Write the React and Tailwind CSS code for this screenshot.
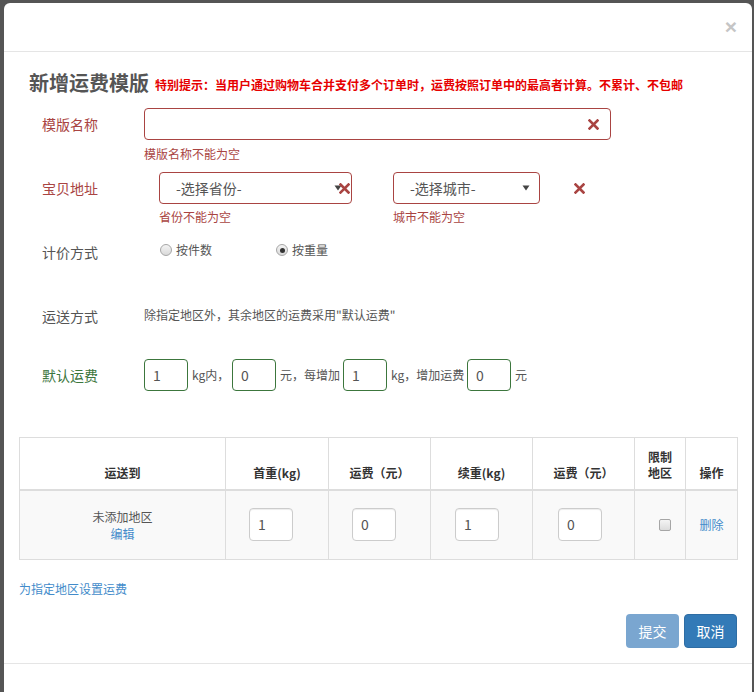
import React from "react";

const FONT = { fontFamily: '"Noto Sans CJK SC", "Noto Sans", "Liberation Sans", sans-serif' };

function XIcon({ className = "" }) {
  return (
    <svg width="11" height="11" viewBox="0 0 11 11" className={className}>
      <path d="M1.5 1.5 L9.5 9.5 M9.5 1.5 L1.5 9.5" stroke="#a94442" strokeWidth="2.6" strokeLinecap="square" />
    </svg>
  );
}

function Caret() {
  return (
    <svg width="8" height="6" viewBox="0 0 8 6">
      <path d="M0.5 0.5 L7.5 0.5 L4 5.5 Z" fill="#444" />
    </svg>
  );
}

function Radio({ checked }) {
  return (
    <span className="relative inline-block w-[12px] h-[12px] rounded-full border border-[#a6a6a6] bg-gradient-to-b from-[#f4f4f4] to-[#d9d9d9]">
      {checked && <span className="absolute left-[2.5px] top-[2.5px] w-[5px] h-[5px] rounded-full bg-[#333]" />}
    </span>
  );
}

function GreenInput({ value }) {
  return (
    <div className="w-[44px] h-[32px] border border-[#3c763d] rounded-[4px] flex items-center pl-[8px] text-[14px] text-[#555] bg-white shrink-0">
      {value}
    </div>
  );
}

function CellInput({ value }) {
  return (
    <div className="w-[44px] h-[33px] border border-[#ccc] rounded-[4px] flex items-center pl-[8px] text-[14px] text-[#555] bg-white shadow-[inset_0_1px_1px_rgba(0,0,0,0.075)]">
      {value}
    </div>
  );
}

export default function App() {
  return (
    <div className="w-[754px] h-[692px] bg-[#555] overflow-hidden pt-[3px] pl-[4px]" style={FONT}>
      <div className="w-[748px] min-h-[740px] bg-white rounded-[6px] flex flex-col">
        {/* header */}
        <div className="h-[49px] border-b border-[#e5e5e5] flex items-center justify-end pr-[15px]">
          <span className="text-[21px] font-bold text-[#c5c5c5] leading-none mt-[-2px]" style={{ fontFamily: '"Liberation Sans", sans-serif' }}>×</span>
        </div>

        {/* body */}
        <div className="px-[15px]">
          {/* title */}
          <div className="mt-[17px] h-[28px] flex items-center pl-[10px]">
            <span className="text-[20px] font-bold text-[#555] leading-[28px]">新增运费模版</span>
            <span className="ml-[6px] mt-[3px] text-[12px] font-bold text-[#e60000] leading-[17px]">
              特别提示：当用户通过购物车合并支付多个订单时，运费按照订单中的最高者计算。不累计、不包邮
            </span>
          </div>

          {/* name */}
          <div className="mt-[11px] flex items-center h-[32px]">
            <div className="w-[125px] pl-[23px] text-[14px] text-[#a94442]">模版名称</div>
            <div className="relative w-[467px] h-[32px] border border-[#a94442] rounded-[4px] bg-white">
              <XIcon className="absolute right-[11px] top-[10px]" />
            </div>
          </div>
          <div className="mt-[5px] h-[17px] leading-[17px] pl-[125px] text-[12px] text-[#a94442]">模版名称不能为空</div>

          {/* address */}
          <div className="mt-[10px] flex">
            <div className="w-[125px] pl-[23px] h-[32px] flex items-center text-[14px] text-[#a94442]">宝贝地址</div>
            <div className="ml-[15px] w-[193px]">
              <div className="relative h-[32px] border border-[#a94442] rounded-[4px] flex items-center pl-[16px] text-[14px] text-[#555]">
                -选择省份-
                <span className="absolute right-[9px] top-[12px]"><Caret /></span>
                <XIcon className="absolute right-[1px] top-[10px]" />
              </div>
              <div className="mt-[4px] h-[17px] leading-[17px] text-[12px] text-[#a94442]">省份不能为空</div>
            </div>
            <div className="ml-[41px] w-[147px]">
              <div className="relative h-[32px] border border-[#a94442] rounded-[4px] flex items-center pl-[16px] text-[14px] text-[#555]">
                -选择城市-
                <span className="absolute right-[9px] top-[12px]"><Caret /></span>
              </div>
              <div className="mt-[4px] h-[17px] leading-[17px] text-[12px] text-[#a94442]">城市不能为空</div>
            </div>
            <div className="ml-[34px] h-[32px] flex items-center">
              <XIcon />
            </div>
          </div>

          {/* pricing */}
          <div className="mt-[17px] h-[20px] flex items-center">
            <div className="w-[125px] pl-[23px] text-[14px] text-[#555]">计价方式</div>
            <div className="ml-[16px] flex items-center mt-[-4px]">
              <Radio />
              <span className="ml-[4px] text-[12px] text-[#555]">按件数</span>
            </div>
            <div className="ml-[64px] flex items-center mt-[-4px]">
              <Radio checked />
              <span className="ml-[4px] text-[12px] text-[#555]">按重量</span>
            </div>
          </div>

          {/* shipping */}
          <div className="mt-[44px] h-[20px] flex items-center">
            <div className="w-[125px] pl-[23px] text-[14px] text-[#555]">运送方式</div>
            <div className="text-[12px] text-[#555] mt-[-3px]">除指定地区外，其余地区的运费采用"默认运费"</div>
          </div>

          {/* default fee */}
          <div className="mt-[33px] h-[32px] flex items-center text-[12px] text-[#555]">
            <div className="w-[125px] pl-[23px] text-[14px] text-[#3c763d]">默认运费</div>
            <GreenInput value="1" />
            <span className="ml-[4px] w-[40px]">kg内，</span>
            <GreenInput value="0" />
            <span className="ml-[4px] w-[63px]">元，每增加</span>
            <GreenInput value="1" />
            <span className="ml-[4px] w-[76px]">kg，增加运费</span>
            <GreenInput value="0" />
            <span className="ml-[4px]">元</span>
          </div>

          {/* table */}
          <table className="mt-[46px] w-[718px] table-fixed border-collapse text-[12px] text-[#333]">
            <colgroup>
              <col className="w-[206px]" />
              <col className="w-[103px]" />
              <col className="w-[102px]" />
              <col className="w-[102px]" />
              <col className="w-[102px]" />
              <col className="w-[51px]" />
              <col className="w-[52px]" />
            </colgroup>
            <thead>
              <tr className="h-[52px]">
                {["运送到", "首重(kg)", "运费（元）", "续重(kg)", "运费（元）"].map((t, i) => (
                  <th key={i} className="border border-[#ddd] border-b-2 align-bottom pb-[8px] font-bold text-center leading-[17px]">{t}</th>
                ))}
                <th className="border border-[#ddd] border-b-2 align-bottom pb-[8px] font-bold text-center leading-[16px]">限制<br />地区</th>
                <th className="border border-[#ddd] border-b-2 align-bottom pb-[8px] font-bold text-center leading-[17px]">操作</th>
              </tr>
            </thead>
            <tbody>
              <tr className="h-[70px] bg-[#f9f9f9]">
                <td className="border border-[#ddd] text-center align-middle text-[12px] text-[#555] leading-[17px]">
                  <div>未添加地区</div>
                  <div className="text-[#428bca]">编辑</div>
                </td>
                <td className="border border-[#ddd] pl-[23px] align-middle"><CellInput value="1" /></td>
                <td className="border border-[#ddd] pl-[23px] align-middle"><CellInput value="0" /></td>
                <td className="border border-[#ddd] pl-[24px] align-middle"><CellInput value="1" /></td>
                <td className="border border-[#ddd] pl-[25px] align-middle"><CellInput value="0" /></td>
                <td className="border border-[#ddd] align-middle">
                  <div className="ml-[24px] w-[12px] h-[12px] rounded-[2px] border border-[#a6a6a6] bg-gradient-to-b from-[#f4f4f4] to-[#dcdcdc]" />
                </td>
                <td className="border border-[#ddd] text-center align-middle text-[#428bca]">删除</td>
              </tr>
            </tbody>
          </table>

          <div className="mt-[20px] h-[17px] leading-[17px] text-[12px] text-[#428bca]">为指定地区设置运费</div>

          <div className="mt-[17px] flex justify-end gap-[5px] pr-[0px]">
            <div className="w-[53px] h-[34px] rounded-[4px] bg-[#7aa6d0] text-white text-[14px] flex items-center justify-center">提交</div>
            <div className="w-[53px] h-[34px] rounded-[4px] bg-[#337ab7] border border-[#2e6da4] text-white text-[14px] flex items-center justify-center">取消</div>
          </div>
          <div className="h-[15px]" />
        </div>

        {/* footer */}
        <div className="border-t border-[#e5e5e5] h-[60px]" />
      </div>
    </div>
  );
}
